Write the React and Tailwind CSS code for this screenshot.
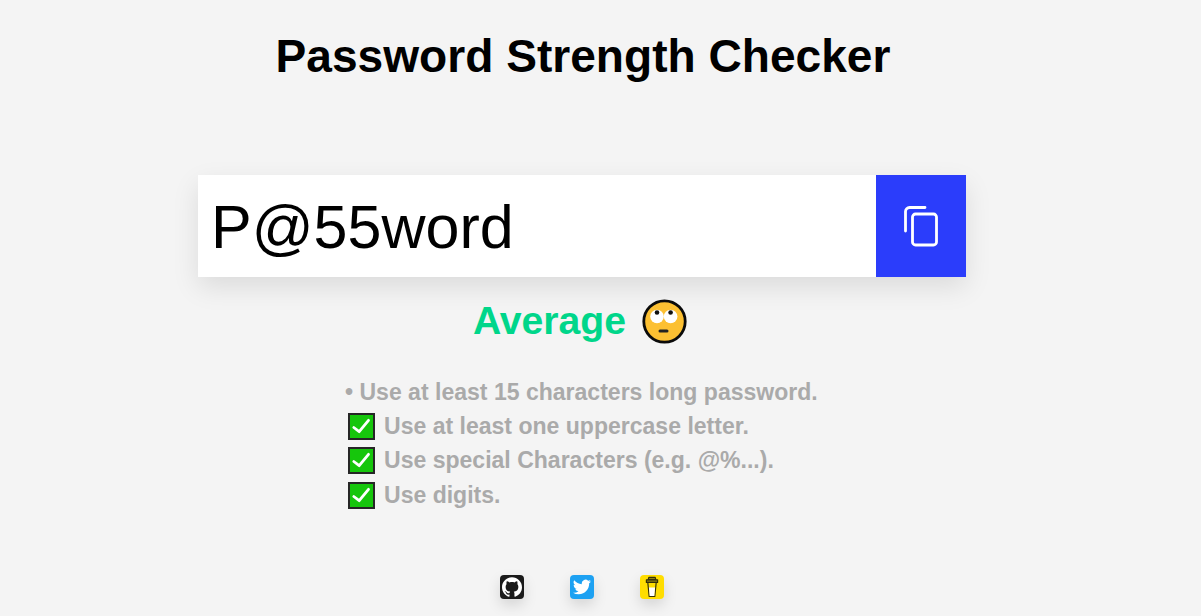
import { SiGithub } from "react-icons/si";

function CheckBox() {
    return (
        <svg width="27" height="27" viewBox="0 0 27 27" className="shrink-0">
            <rect x="1" y="1" width="25" height="25" fill="#16c60c" stroke="#262626" strokeWidth="2" />
            <path d="M5.8 14.5l5.4 4.2 9.3-11.4" fill="none" stroke="#fff" strokeWidth="2.8" strokeLinecap="round" strokeLinejoin="round" />
        </svg>
    );
}

function RollingEyes() {
    return (
        <svg width="45" height="45" viewBox="0 0 45 45">
            <circle cx="22.5" cy="22.5" r="20.7" fill="#fcc032" stroke="#0b0b0b" strokeWidth="2.8" />
            <circle cx="15" cy="17.5" r="6.8" fill="#fff" />
            <circle cx="28.6" cy="17.5" r="6.8" fill="#fff" />
            <circle cx="15" cy="13.5" r="2.3" fill="#111" />
            <circle cx="28.6" cy="13.5" r="2.3" fill="#111" />
            <rect x="16.5" y="30.5" width="10" height="3" rx="1.5" fill="#222" />
        </svg>
    );
}

function Tip({ children }) {
    return (
        <div className="flex items-center h-[34.5px]">
            <span className="ml-[3px] mr-[9px] flex"><CheckBox /></span>
            {children}
        </div>
    );
}

export default function App() {
    return (
        <div className="min-h-[616px] bg-[#f4f4f4] flex flex-col items-center font-['Liberation_Sans',Arial,sans-serif] overflow-hidden">
            {/* Title */}
            <h1 className="mt-[30px] h-[53px] leading-[53px] text-[46.1px] font-bold text-black text-center mr-[35px]">
                Password Strength Checker
            </h1>

            {/* Input */}
            <div className="mt-[92px] flex w-[768px] h-[102px] bg-white shadow-[0_10px_25px_rgba(0,0,0,0.1)] mr-[37px]">
                <div className="flex-1 pl-[13px] pt-[3px] flex items-center text-[61px] text-black">P@55word</div>
                <button className="w-[90px] h-full bg-[#2b3dfb] flex items-center justify-center">
                    <svg width="34" height="41" viewBox="0 0 34 41" fill="none" stroke="#fff" strokeWidth="2.8" strokeLinecap="round">
                        <path d="M1.5 25V5.5a4 4 0 0 1 4-4H21" />
                        <rect x="8.5" y="8" width="24" height="31" rx="3" />
                    </svg>
                </button>
            </div>

            {/* Strength */}
            <div className="mt-[20px] h-[48px] flex items-center gap-[16px] text-[#00d68a] text-[39.2px] font-bold mr-[41px]">
                Average
                <RollingEyes />
            </div>

            {/* Tips */}
            <div className="mt-[30px] w-[474px] mr-[37px] text-[#aaaaaa] text-[23.04px] font-bold">
                <div className="h-[34px] flex items-center">• Use at least 15 characters long password.</div>
                <Tip>Use at least one uppercase letter.</Tip>
                <Tip>Use special Characters (e.g. @%...).</Tip>
                <Tip>Use digits.</Tip>
            </div>

            {/* Links */}
            <div className="mt-[62px] flex gap-[46px] mr-[37px]">
                <a className="w-6 h-6 rounded-[4px] bg-[#1a1a1a] flex items-center justify-center shadow-[0_6px_14px_rgba(0,0,0,0.13)]">
                    <SiGithub size={20} color="#fff" />
                </a>
                <a className="w-6 h-6 rounded-[4px] bg-[#1da1f2] flex items-center justify-center shadow-[0_6px_14px_rgba(0,0,0,0.13)]">
                    <svg width="18" height="18" viewBox="0 0 24 24" fill="#fff">
                        <path d="M23.95 4.57a10 10 0 0 1-2.82.77 4.96 4.96 0 0 0 2.16-2.72c-.95.55-2 .96-3.13 1.19a4.92 4.92 0 0 0-8.38 4.48C7.69 8.1 4.07 6.13 1.64 3.16a4.9 4.9 0 0 0 1.52 6.57 4.9 4.9 0 0 1-2.23-.61v.06a4.92 4.92 0 0 0 3.95 4.83 5 5 0 0 1-2.21.08 4.94 4.94 0 0 0 4.6 3.42A9.87 9.87 0 0 1 0 19.54a14 14 0 0 0 7.56 2.21c9.05 0 14-7.5 14-13.98 0-.21 0-.42-.02-.63a9.94 9.94 0 0 0 2.46-2.55z" />
                    </svg>
                </a>
                <a className="w-6 h-6 rounded-[4px] bg-[#ffdd00] flex items-center justify-center shadow-[0_6px_14px_rgba(0,0,0,0.13)]">
                    <svg width="24" height="24" viewBox="0 0 24 24" fill="none" stroke="#33300a" strokeWidth="1.2" strokeLinejoin="round">
                        <path d="M7.8 7.5l1.4 14h5.6l1.4-14z" fill="#ffdd00" />
                        <path d="M8.9 12.5h6.2l-.8 8.5H9.7z" fill="#fff" stroke="none" />
                        <path d="M8.8 2.4h6.4l.6 2.2H8.2z" fill="#8f7d10" />
                        <path d="M6.4 4.8h11.2v2.6H6.4z" fill="#8f7d10" />
                    </svg>
                </a>
            </div>
        </div>
    );
}
